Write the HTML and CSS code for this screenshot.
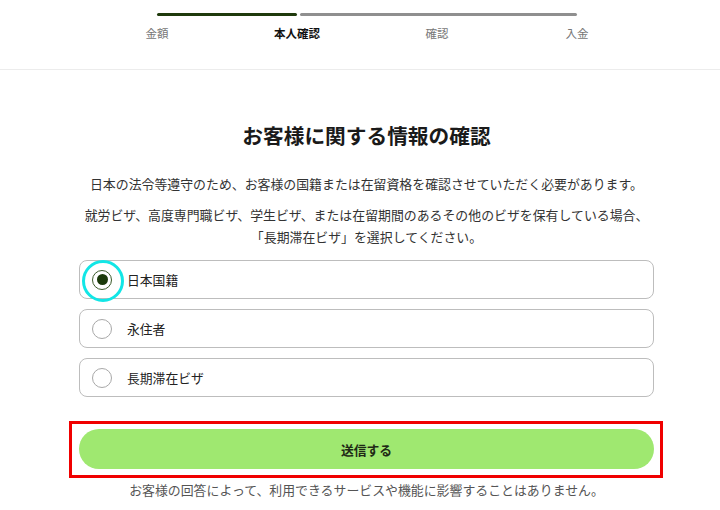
FILE: index.html
```html
<!DOCTYPE html>
<html lang="ja">
<head>
<meta charset="utf-8">
<link rel="stylesheet" href="styles.css">
</head>
<body>
<header class="header">
  <div class="stepper">
    <div class="track">
      <div class="seg seg-done"></div>
      <div class="seg seg-todo"></div>
    </div>
    <div class="labels">
      <span class="step">金額</span>
      <span class="step step-active">本人確認</span>
      <span class="step">確認</span>
      <span class="step">入金</span>
    </div>
  </div>
</header>
<main class="main">
  <h1 class="title">お客様に関する情報の確認</h1>
  <p class="lead">日本の法令等遵守のため、お客様の国籍または在留資格を確認させていただく必要があります。</p>
  <p class="lead lead-2">就労ビザ、高度専門職ビザ、学生ビザ、または在留期間のあるその他のビザを保有している場合、<br>「長期滞在ビザ」を選択してください。</p>
  <div class="options">
    <label class="option">
      <span class="radio radio-checked"><span class="dot"></span></span>
      <span class="opt-text">日本国籍</span>
    </label>
    <label class="option">
      <span class="radio"></span>
      <span class="opt-text">永住者</span>
    </label>
    <label class="option">
      <span class="radio"></span>
      <span class="opt-text">長期滞在ビザ</span>
    </label>
  </div>
  <div class="submit-wrap">
    <button class="submit">送信する</button>
  </div>
  <p class="note">お客様の回答によって、利用できるサービスや機能に影響することはありません。</p>
</main>
</body>
</html>
```
FILE: styles.css
```css
html, body {
  margin: 0;
  padding: 0;
  background: #ffffff;
}
body {
  font-family: "Noto Sans CJK JP", "Noto Sans", sans-serif;
  color: #222;
}
.header {
  height: 70px;
  border-bottom: 1px solid #ececec;
  box-sizing: border-box;
  padding-top: 13px;
}
.stepper {
  width: 560px;
  margin-left: 87px;
}
.track {
  display: flex;
  gap: 3px;
  margin: 0 70px;
  height: 3px;
}
.seg {
  height: 3px;
  border-radius: 2px;
}
.seg-done {
  width: 140px;
  background: #1f3a0c;
}
.seg-todo {
  flex: 1;
  background: #8f8f8f;
}
.labels {
  display: grid;
  grid-template-columns: repeat(4, 140px);
  margin-top: 9px;
}
.step {
  text-align: center;
  font-size: 11.5px;
  line-height: 16px;
  color: #777;
}
.step-active {
  color: #111;
  font-weight: 700;
}
.main {
  width: 575px;
  margin-left: 79px;
  padding-top: 50px;
  text-align: center;
}
.title {
  margin: 0;
  font-size: 20.7px;
  line-height: 30px;
  font-weight: 700;
  color: #1a1a1a;
}
.lead {
  margin: 23px -20px 0;
  font-size: 12.9px;
  line-height: 22px;
  color: #333;
}
.lead-2 {
  margin-top: 9px;
}
.options {
  margin-top: 12px;
  display: flex;
  flex-direction: column;
  gap: 10px;
}
.option {
  display: flex;
  align-items: center;
  height: 39px;
  box-sizing: border-box;
  border: 1px solid #bdbdbd;
  border-radius: 8px;
  padding-left: 12px;
  text-align: left;
}
.radio {
  width: 20px;
  height: 20px;
  box-sizing: border-box;
  border: 1px solid #a8a8a8;
  border-radius: 50%;
  display: flex;
  align-items: center;
  justify-content: center;
  position: relative;
  flex: none;
}
.radio-checked {
  border-color: #3c5a2a;
}
.radio-checked::after {
  content: "";
  position: absolute;
  left: -11px;
  top: -11px;
  width: 36px;
  height: 36px;
  border: 3px solid #12e6e6;
  border-radius: 50%;
}
.dot {
  width: 11px;
  height: 11px;
  border-radius: 50%;
  background: #1b3a0a;
}
.opt-text {
  margin-left: 15px;
  font-size: 12.8px;
  color: #222;
}
.submit-wrap {
  margin-top: 32px;
  position: relative;
}
.submit-wrap::after {
  content: "";
  position: absolute;
  left: -10px;
  right: -9px;
  top: -8px;
  bottom: -9px;
  border: 3px solid #f00000;
}
.submit {
  display: block;
  width: 100%;
  height: 40px;
  border: none;
  border-radius: 20px;
  background: #9fe870;
  font-family: "Noto Sans CJK JP", "Noto Sans", sans-serif;
  font-size: 12.8px;
  font-weight: 700;
  color: #1f2a16;
}
.note {
  margin: 11px -20px 0;
  font-size: 12.9px;
  line-height: 20px;
  color: #555;
}
```
